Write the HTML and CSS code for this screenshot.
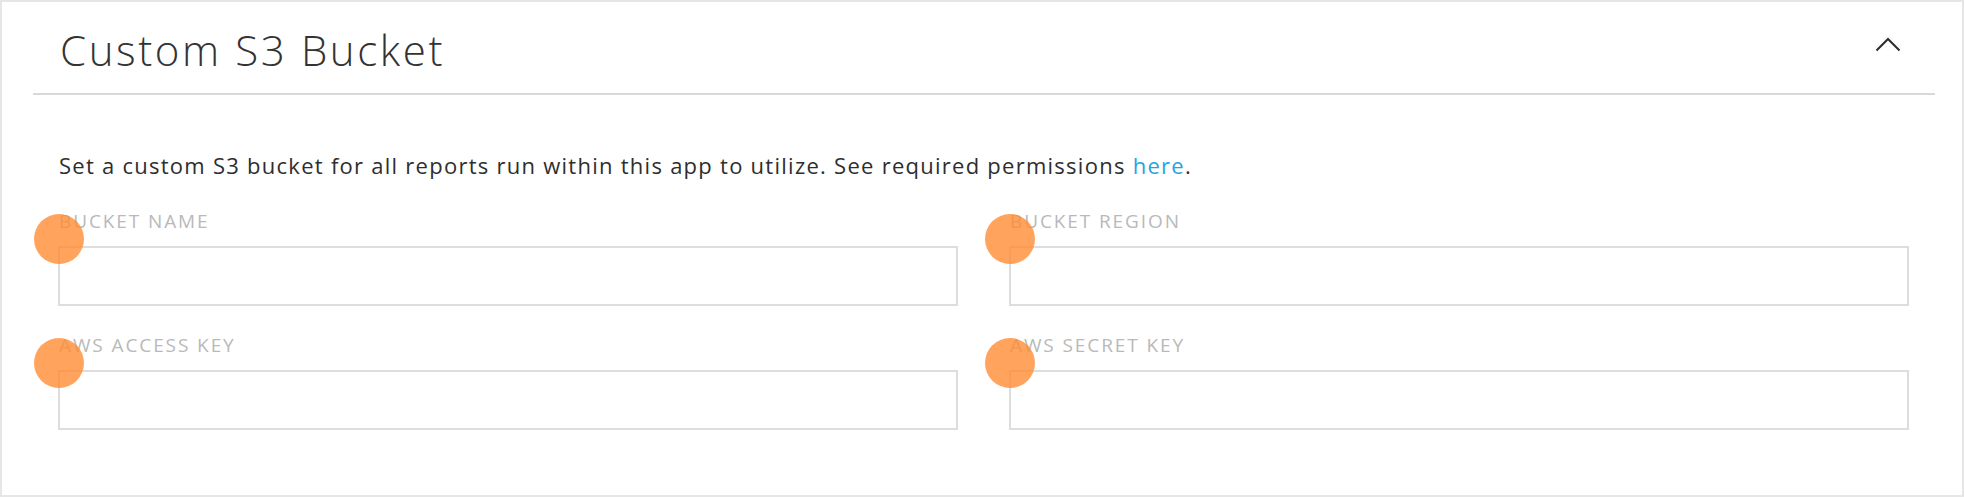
FILE: index.html
```html
<!DOCTYPE html>
<html lang="en">
<head>
<meta charset="utf-8">
<title>Custom S3 Bucket</title>
<link rel="stylesheet" href="styles.css">
</head>
<body>
<section class="card">
  <header class="card-header">
    <h2 class="card-title">Custom S3 Bucket</h2>
    <button class="collapse-btn" aria-label="Collapse">
      <svg width="26" height="15" viewBox="0 0 26 15" aria-hidden="true"><path d="M1.5 13.5 L13 2 L24.5 13.5" fill="none" stroke="#2b2b2b" stroke-width="2"/></svg>
    </button>
  </header>
  <div class="card-body">
    <p class="intro">Set a custom S3 bucket for all reports run within this app to utilize. See required permissions <a href="#" class="link">here</a>.</p>
    <div class="fields">
      <div class="field">
        <label class="field-label">BUCKET NAME</label>
        <input class="field-input" type="text">
        <span class="touch"></span>
      </div>
      <div class="field">
        <label class="field-label">BUCKET REGION</label>
        <input class="field-input" type="text">
        <span class="touch"></span>
      </div>
      <div class="field">
        <label class="field-label">AWS ACCESS KEY</label>
        <input class="field-input" type="text">
        <span class="touch"></span>
      </div>
      <div class="field">
        <label class="field-label">AWS SECRET KEY</label>
        <input class="field-input" type="text">
        <span class="touch"></span>
      </div>
    </div>
  </div>
</section>
</body>
</html>
```

FILE: styles.css
```css
* { box-sizing: border-box; }

html, body {
  margin: 0;
  padding: 0;
  background: #ffffff;
}

body {
  font-family: "Open Sans", "Liberation Sans", sans-serif;
  color: #333333;
}

.card {
  width: 1964px;
  height: 497px;
  border: 2px solid #e6e6e6;
  background: #ffffff;
}

.card-header {
  display: flex;
  justify-content: space-between;
  align-items: flex-start;
  margin: 0 27px 0 31px;
  padding: 23px 34px 18px 27px;
  border-bottom: 2px solid #d9d9d9;
}

.card-title {
  margin: 0;
  font-size: 42px;
  line-height: 50px;
  font-weight: 300;
  letter-spacing: 2.6px;
  color: #333333;
}

.collapse-btn {
  margin-top: 12px;
  padding: 0;
  border: 0;
  background: none;
  display: flex;
}

.card-body {
  padding: 0 53px 0 56px;
}

.intro {
  margin: 55px 0 0 1px;
  font-size: 22px;
  line-height: 30px;
  color: #2e2e2e;
  letter-spacing: 1.26px;
}

.link {
  color: #1ea6e2;
  text-decoration: none;
}

.fields {
  display: grid;
  grid-template-columns: 1fr 1fr;
  column-gap: 51px;
  row-gap: 27px;
  margin-top: 29px;
}

.field {
  position: relative;
  display: flex;
  flex-direction: column;
}

.field-label {
  font-size: 19px;
  line-height: 24px;
  color: #b9b9b9;
  letter-spacing: 1.9px;
  margin: 0 0 13px 1px;
}

.field-input {
  height: 60px;
  width: 100%;
  border: 2px solid #dddddd;
  background: #ffffff;
  font-family: inherit;
  font-size: 18px;
  padding: 0 12px;
  outline: none;
}

.touch {
  position: absolute;
  left: -24px;
  top: 5px;
  width: 50px;
  height: 50px;
  border-radius: 50%;
  background: rgba(255, 140, 52, 0.8);
  pointer-events: none;
}
```
